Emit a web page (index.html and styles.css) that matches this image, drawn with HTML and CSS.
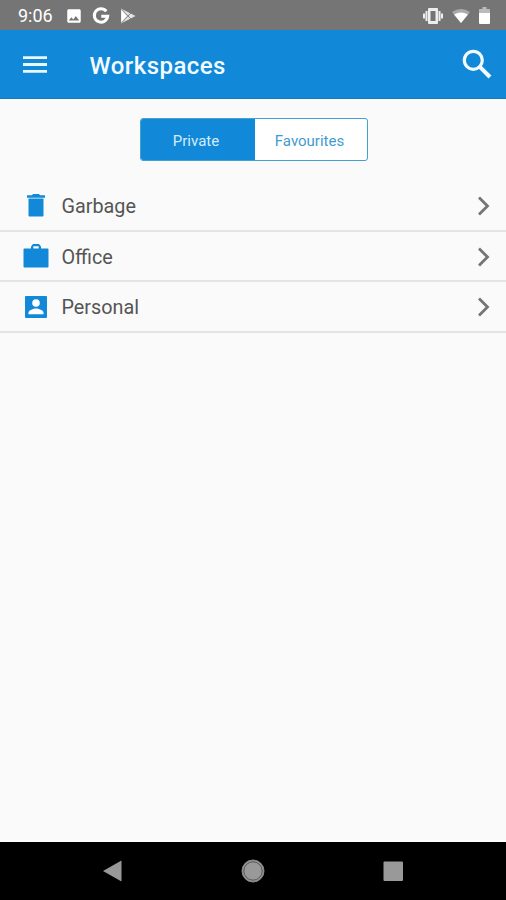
FILE: index.html
```html
<!DOCTYPE html>
<html lang="en">
<head>
<meta charset="utf-8">
<title>Workspaces</title>
<link rel="stylesheet" href="styles.css">
</head>
<body>
<div class="screen">
  <div class="status">
    <span class="time">9:06</span>
    <div class="notifications">
      <svg width="18" height="18" viewBox="0 0 24 24" fill="#fff"><path d="M21 19V5c0-1.100-.9-2-2-2H5c-1.100 0-2 .9-2 2v14c0 1.100.9 2 2 2h14c1.100 0 2-.9 2-2zM8.500 13.500l2.500 3.010L14.500 12l4.500 6H5l3.500-4.500z"/></svg>
      <svg width="18" height="18" viewBox="0 0 18 18" fill="none" stroke="#fff" stroke-width="3"><path d="M14.300 4.300A6.700 6.700 0 1 0 15.700 9.200H9.300"/></svg>
      <svg width="18" height="18" viewBox="0 0 18 18"><path d="M2 1.500v15L16.500 9z" fill="#e4e4e4"/><path d="M2 1.500 11.800 12M2 16.500 11.800 6" fill="none" stroke="#858585" stroke-width="1"/><path d="M2.500 3.500v11L7.500 9z" fill="#fff"/></svg>
    </div>
    <div class="system">
      <svg width="20" height="18" viewBox="0 0 20 18" fill="#eee"><path fill-rule="evenodd" d="M6 1h8q1 0 1 1v14q0 1-1 1H6q-1 0-1-1V2q0-1 1-1zM7.500 4v10h5V4z"/><path d="M2.500 4H4.500v10H2.500zM0 6.500h2v5H0zM15.500 4h2v10h-2zM18 6.500H20v5h-2z"/></svg>
      <svg width="18" height="16" viewBox="0 0 18 16"><path d="M0 4Q9-2 18 4L9 15z" fill="#aaa"/><path d="M2 6.500Q9 2.500 16 6.500L9 15z" fill="#fff"/></svg>
      <svg width="11" height="17" viewBox="0 0 11 17"><path d="M3.500 0h4v2H10q1 0 1 1v4H0V3q0-1 1-1h2.500z" fill="#bbb"/><path d="M0 6h11v10q0 1-1 1H1q-1 0-1-1z" fill="#fff"/></svg>
    </div>
  </div>
  <header class="appbar">
    <svg class="menu" width="24" height="17" viewBox="0 0 24 17" fill="#e8f8ff"><path d="M0 .2h24v2.800H0zM0 7.100h24v2.800H0zM0 14h24v2.800H0z"/></svg>
    <h1 class="title">Workspaces</h1>
    <svg class="search" width="30" height="30" viewBox="0 0 30 30" fill="none" stroke="#f2fbff"><circle cx="11.300" cy="11.300" r="9" stroke-width="3.200"/><path d="M17.800 17.800 28 28" stroke-width="4"/></svg>
  </header>
  <main class="content">
    <div class="tabs">
      <div class="tab active">Private</div>
      <div class="tab">Favourites</div>
    </div>
    <div class="list">
      <div class="row">
        <svg class="icon" width="26" height="26" viewBox="0 0 26 26" fill="#1188d8"><path d="M4 2.200h5l1-1.200h6l1 1.200h5v2.600H4zM5.500 5.600h15v17q0 1-1 1h-13q-1 0-1-1z"/></svg>
        <span class="label">Garbage</span>
        <svg class="chevron" width="14" height="20" viewBox="0 0 14 20"><path d="M2 1.500 10.500 10 2 18.500"/></svg>
      </div>
      <div class="row">
        <svg class="icon" width="26" height="26" viewBox="0 1 26 26" fill="#1188d8"><path fill-rule="evenodd" d="M1.500 5.500H8V3.500l2-2.500h6l2 2.500v2h6.500q1 0 1 1v17q0 1-1 1h-23q-1 0-1-1v-17q0-1 1-1zM10.300 5.500h5.400V3.300h-5.400z"/></svg>
        <span class="label">Office</span>
        <svg class="chevron" width="14" height="20" viewBox="0 0 14 20"><path d="M2 1.500 10.500 10 2 18.500"/></svg>
      </div>
      <div class="row">
        <svg class="icon" width="26" height="26" viewBox="0 0 26 26"><rect x="2" y="2" width="22" height="22" rx="1" fill="#1188d8"/><circle cx="13" cy="9" r="3.800" fill="#fff"/><path d="M5.500 20.300v-1.500c0-2.700 5-4.300 7.500-4.300s7.500 1.600 7.500 4.300v1.500z" fill="#fff"/></svg>
        <span class="label">Personal</span>
        <svg class="chevron" width="14" height="20" viewBox="0 0 14 20"><path d="M2 1.500 10.500 10 2 18.500"/></svg>
      </div>
    </div>
  </main>
  <nav class="navbar">
    <svg width="24" height="26" viewBox="0 0 24 26" fill="#999"><path d="M2 13 20.500 2.500v21z"/></svg>
    <svg width="24" height="26" viewBox="0 0 24 26"><circle cx="12" cy="13" r="11" fill="#999" stroke="#888"/><circle cx="12" cy="13" r="9.200" fill="none" stroke="#444" stroke-width=".8"/></svg>
    <svg width="24" height="26" viewBox="0 0 24 26" fill="#999"><rect x="2.500" y="3.500" width="19.500" height="19.500" rx="1"/></svg>
  </nav>
</div>
</body>
</html>
```
FILE: styles.css
```css
* { box-sizing: border-box; }
body { margin: 0; font-family: Roboto, "Liberation Sans", sans-serif; }
svg { display: block; flex: none; }
.screen { display: flex; flex-direction: column; width: 506px; height: 900px; background: #fafafa; }
.status { display: flex; align-items: center; height: 30px; padding: 1px 16px 0 18px; background: #757575; color: #fff; }
.time { width: 47px; font-size: 18px; line-height: 28px; }
.notifications { display: flex; gap: 9px; }
.system { display: flex; align-items: center; gap: 9px; margin-left: auto; }
.appbar { display: flex; align-items: center; height: 69px; padding: 0 14px 0 23px; background: #1188d8; border-bottom: 1px solid #0b7bc5; color: #f2fbff; }
.title { margin: 3px 0 0 42.500px; font-size: 24px; line-height: 30px; font-weight: 500; letter-spacing: .45px; }
.search { margin-left: auto; }
.content { flex: 1; border-top: 1px solid #fff; border-bottom: 2px solid #fff; }
.tabs { display: flex; width: 228px; height: 43px; margin: 18px 0 0 140px; border: 1px solid #459fcf; border-radius: 3px; background: #fff; overflow: hidden; }
.tab { flex: 1; padding: 1px 3px 0 0; font-size: 15px; line-height: 43px; text-align: center; color: #3f9bd0; }
.tab.active { flex: 0 0 114px; padding-right: 4px; background: #1188d8; color: #d5edfa; }
.list { margin-top: 20px; }
.row { display: flex; align-items: center; height: 50.500px; padding: 2px 15px 0 23px; border-bottom: 2px solid #e4e4e4; }
.label { margin-left: 12.500px; padding-top: 2px; font-size: 19.800px; line-height: 26px; color: #555; }
.chevron { margin-left: auto; fill: none; stroke: #757575; stroke-width: 2.800px; }
.navbar { display: flex; align-items: center; justify-content: space-between; height: 58px; padding: 0 101px; background: #000; }
```
